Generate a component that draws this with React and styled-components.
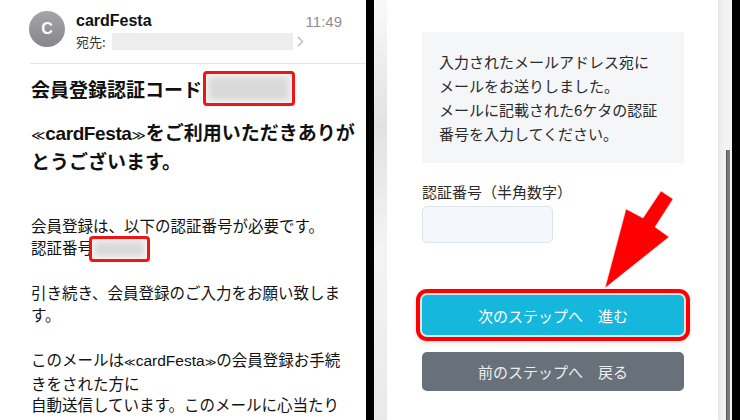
import React from "react";
import styled, { createGlobalStyle } from "styled-components";

const Global = createGlobalStyle`
  html, body { margin: 0; padding: 0; background: #000; }
  body { width: 740px; height: 420px; overflow: hidden; }
  #root { width: 740px; height: 420px; }
`;

const FONT = `"Liberation Sans", "Noto Sans CJK JP", sans-serif`;
const JP = `"Noto Sans CJK JP", "Liberation Sans", sans-serif`;

const Page = styled.div`
  display: flex;
  gap: 8px;
  width: 740px;
  height: 420px;
  background: #000;
`;

const MailPanel = styled.div`
  width: 366px;
  flex-shrink: 0;
  height: 420px;
  background: #fff;
  overflow: hidden;
  font-family: ${FONT};
  color: #111;
`;

const Header = styled.div`
  display: flex;
  align-items: flex-start;
  gap: 11px;
  padding: 11px 24px 0 29px;
`;

const Avatar = styled.div`
  width: 36px;
  height: 36px;
  border-radius: 50%;
  background: linear-gradient(180deg, #a4a4a9 0%, #86868b 100%);
  color: #fff;
  display: flex;
  align-items: center;
  justify-content: center;
  font-size: 16px;
  font-weight: 600;
  flex-shrink: 0;
`;

const HeaderMain = styled.div`
  flex: 1;
  display: flex;
  flex-direction: column;
  gap: 1px;
`;

const HeaderRow = styled.div`
  display: flex;
  align-items: center;
  justify-content: ${(p) => (p.$spread ? "space-between" : "flex-start")};
  height: ${(p) => p.$h}px;
`;

const Sender = styled.span`
  font-size: 16px;
  font-weight: 700;
  color: #111;
`;

const Time = styled.span`
  font-size: 15px;
  color: #8e8e93;
`;

const ToLabel = styled.span`
  font-family: ${JP};
  font-size: 13px;
  color: #333;
`;

const BlurBar = styled.span`
  display: inline-block;
  width: 181px;
  height: 17px;
  margin-left: 6px;
  background: #ededed;
  filter: blur(0.6px);
`;

const Chevron = styled.svg`
  margin-left: 4px;
`;

const Rule = styled.div`
  height: 1px;
  background: #e3e3e3;
  margin: 13px 0 0 30px;
`;

const MailBody = styled.div`
  padding: 0 10px 0 31px;
`;

const Subject = styled.div`
  display: flex;
  align-items: center;
  height: 35px;
  margin-top: 7px;
  font-family: ${JP};
  font-size: 19px;
  font-weight: 700;
  white-space: nowrap;
`;

const Greeting = styled.div`
  margin-top: 14px;
  font-family: ${FONT};
  font-size: 19px;
  font-weight: 700;
  line-height: 27px;
  white-space: nowrap;
`;

const Brand = styled.span`
  letter-spacing: ${(p) => p.$ls || 0}px;
`;

const Guill = styled.span`
  font-family: "DejaVu Sans", sans-serif;
  font-size: 0.72em;
  font-weight: 400;
  letter-spacing: 0;
`;

const Para = styled.p`
  margin: ${(p) => p.$mt}px 0 0;
  font-family: ${FONT};
  font-size: 15.5px;
  line-height: 21.5px;
  white-space: nowrap;
`;

const Masked = styled.span`
  display: inline-block;
  box-sizing: border-box;
  vertical-align: middle;
  width: ${(p) => p.$w}px;
  height: ${(p) => p.$h}px;
  margin: ${(p) => p.$m};
  border: 3px solid #f21313;
  border-radius: 4px;
  background: #d9d9d9;
  box-shadow: inset 0 0 0 1px #eef6f6, inset 0 0 6px 3px #f2f2f2;
`;

const FormPanel = styled.div`
  position: relative;
  width: 358px;
  flex-shrink: 0;
  height: 420px;
  display: grid;
  grid-template-columns: 13px 331px 14px;
  background: linear-gradient(160deg, #f6f6f6 0%, #e8e8e8 40%, #f3f3f3 70%, #e6e6e6 100%);
  overflow: hidden;
`;

const SideStrip = styled.div`
  background: ${(p) =>
    p.$right
      ? "linear-gradient(90deg, #e4e4e4 0, #f1f1f1 4px, #f4f4f4 100%)"
      : "linear-gradient(165deg, #fafafa 0%, #e2e2e2 30%, #f4f4f4 60%, #e9e9e9 100%)"};
`;

const Card = styled.div`
  background: #fff;
  padding: 32px 34px 0 35px;
  display: flex;
  flex-direction: column;
  font-family: ${JP};
  color: #2a2a2a;
`;

const Notice = styled.div`
  background: #f4f6f8;
  padding: 18px 10px 17px 17px;
  font-size: 15px;
  line-height: 24px;
  white-space: nowrap;
`;

const FieldLabel = styled.label`
  margin-top: 18px;
  font-size: 15px;
  line-height: 21px;
`;

const CodeInput = styled.input`
  box-sizing: border-box;
  margin-top: 4px;
  width: 131px;
  height: 37px;
  border: 1px solid #dde3ea;
  border-radius: 5px;
  background: #f4f8fc;
  outline: none;
`;

const StepButton = styled.button`
  box-sizing: border-box;
  width: 262px;
  height: ${(p) => (p.$primary ? 40 : 39)}px;
  margin-top: ${(p) => (p.$primary ? 52 : 17)}px;
  border: none;
  border-radius: 5px;
  background: ${(p) => (p.$primary ? "#16b7dc" : "#68717a")};
  color: ${(p) => (p.$primary ? "#fff" : "#eceeef")};
  font-family: ${JP};
  font-size: 15px;
  box-shadow: ${(p) =>
    p.$primary ? "0 0 0 2px #dfe7ea, 0 0 0 6px #ff0000, 0 2px 5px 6px rgba(0,0,0,0.12)" : "none"};
  white-space: pre;
`;

const Scrollbar = styled.div`
  position: absolute;
  left: 352px;
  top: 150px;
  width: 3px;
  bottom: 0;
  background: #7a7a7a;
  border-left: 1px solid #555;
`;

const ArrowLayer = styled.svg`
  position: absolute;
  left: 0;
  top: 0;
  pointer-events: none;
`;

export default function App() {
  return (
    <>
      <Global />
      <Page>
        <MailPanel>
          <Header>
            <Avatar>C</Avatar>
            <HeaderMain>
              <HeaderRow $spread $h={20}>
                <Sender>cardFesta</Sender>
                <Time>11:49</Time>
              </HeaderRow>
              <HeaderRow $h={18}>
                <ToLabel>宛先:</ToLabel>
                <BlurBar />
                <Chevron width="7" height="11" viewBox="0 0 7 11">
                  <polyline points="1,1 5.5,5.5 1,10" fill="none" stroke="#b9b9bd" strokeWidth="1.4" />
                </Chevron>
              </HeaderRow>
            </HeaderMain>
          </Header>
          <Rule />
          <MailBody>
            <Subject>
              会員登録認証コード
              <Masked $w={92} $h={35} $m="0 0 0 1px" />
            </Subject>
            <Greeting>
              <Brand $ls={-0.4}>
                <Guill>≪</Guill>cardFesta<Guill>≫</Guill>
              </Brand>
              をご利用いただきありが
              <br />
              とうございます。
            </Greeting>
            <Para $mt={40}>
              会員登録は、以下の認証番号が必要です。
              <br />
              認証番号
              <Masked $w={61} $h={26} $m="-7px 0 -7px -4px" />
            </Para>
            <Para $mt={24}>
              引き続き、会員登録のご入力をお願い致しま
              <br />
              す。
            </Para>
            <Para $mt={24}>
              このメールは
              <Brand>
                <Guill>≪</Guill>cardFesta<Guill>≫</Guill>
              </Brand>
              の会員登録お手続
              <br />
              きをされた方に
              <br />
              自動送信しています。このメールに心当たり
            </Para>
          </MailBody>
        </MailPanel>
        <FormPanel>
          <SideStrip />
          <Card>
            <Notice>
              入力されたメールアドレス宛に
              <br />
              メールをお送りしました。
              <br />
              メールに記載された6ケタの認証
              <br />
              番号を入力してください。
            </Notice>
            <FieldLabel>認証番号（半角数字）</FieldLabel>
            <CodeInput type="text" />
            <StepButton $primary>{"次のステップへ　進む"}</StepButton>
            <StepButton>{"前のステップへ　戻る"}</StepButton>
          </Card>
          <SideStrip $right />
          <Scrollbar />
          <ArrowLayer width="358" height="420" viewBox="374 0 358 420">
            <polygon
              points="605,288 626,209 643,218 661,191 673,199 655,227 669,237"
              fill="#ff0000"
              stroke="#ffdede"
              strokeWidth="0.6"
            />
          </ArrowLayer>
        </FormPanel>
      </Page>
    </>
  );
}
